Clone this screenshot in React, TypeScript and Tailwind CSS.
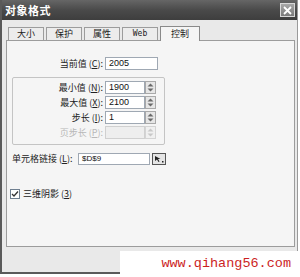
import React from "react";

const cjk = { fontFamily: '"Noto Sans CJK SC", "Liberation Sans", sans-serif' };
const latin = { fontFamily: '"Liberation Sans", "Noto Sans CJK SC", sans-serif' };

function Spinner({ disabled }: { disabled?: boolean }) {
  const c = disabled ? "#c8c8c8" : "#6a6a6a";
  return (
    <div className={`w-[11px] h-[13px] border ${disabled ? "border-[#d4d4d4] bg-[#f0f0f0]" : "border-[#a9a9a9] bg-[#e6e6e6]"} flex flex-col items-center justify-center gap-[1px]`}>
      <svg width="7" height="4" viewBox="0 0 7 4"><path d="M0.5 3.5 L3.5 0.5 L6.5 3.5 Z" fill={c} /></svg>
      <svg width="7" height="4" viewBox="0 0 7 4"><path d="M0.5 0.5 L3.5 3.5 L6.5 0.5 Z" fill={c} /></svg>
    </div>
  );
}

function Label({ text, k, w, disabled }: { text: string; k: string; w: string; disabled?: boolean }) {
  return (
    <div className={`${w} text-right text-[9px] leading-[13px] whitespace-nowrap pr-[2px] ${disabled ? "text-[#b8b8b8]" : "text-[#222]"}`} style={cjk}>
      {text} (<u>{k}</u>):
    </div>
  );
}

function SpinRow({ label, k, value, disabled }: { label: string; k: string; value: string; disabled?: boolean }) {
  return (
    <div className="flex items-center h-[13px]">
      <Label text={label} k={k} w="w-[92px]" disabled={disabled} />
      <div className={`w-[40px] h-[13px] border ${disabled ? "border-[#d0d0d0] bg-[#eeeeee]" : "border-[#9fa8b3] bg-white"} text-[9px] leading-[11px] pl-[3px] text-[#111]`} style={latin}>
        {value}
      </div>
      <Spinner disabled={disabled} />
    </div>
  );
}

export default function App() {
  const tabs = ["大小", "保护", "属性", "Web"];
  return (
    <div className="w-[300px] h-[277px] bg-white relative overflow-hidden">
      <div className="w-[298px] h-[274px] bg-[#e9e9e9] border-l-2 border-r border-b-2 border-[#5a5a5a] border-r-[#9a9a9a] flex flex-col">
        {/* Title bar */}
        <div className="h-[20px] bg-gradient-to-b from-[#666666] via-[#4a4a4a] to-[#3e3e3e] flex items-center justify-between pl-[3px] pr-[2px]">
          <span className="text-white font-bold text-[11px] leading-none tracking-[0.5px]" style={cjk}>对象格式</span>
          <div className="w-[15px] h-[14px] border border-[#d8d8d8] bg-gradient-to-b from-[#a8a8a8] to-[#7a7a7a] flex items-center justify-center">
            <svg width="9" height="9" viewBox="0 0 9 9"><path d="M1 1 L8 8 M8 1 L1 8" stroke="#ffffff" strokeWidth="1.8" /></svg>
          </div>
        </div>
        {/* Tabs */}
        <div className="h-[20px] flex items-end pl-[6px] gap-[2px]">
          {tabs.map((t) => (
            <div key={t} className="w-[36px] h-[13px] border border-b-0 border-[#9c9c9c] bg-[#ececec] flex items-center justify-center text-[9px] text-[#222]" style={t === "Web" ? { fontFamily: '"DejaVu Sans Mono", monospace', fontSize: "8px" } : cjk}>
              {t}
            </div>
          ))}
          <div className="w-[40px] h-[15px] border border-b-0 border-[#8a8a8a] bg-[#f5f5f5] flex items-center justify-center text-[9px] text-[#222] -mb-[1px] relative z-10" style={cjk}>
            控制
          </div>
        </div>
        {/* Panel */}
        <div className="ml-[4px] w-[289px] h-[207px] border border-[#9c9c9c] bg-[#f5f5f5] flex flex-col">
          <div className="flex items-center h-[13px] mt-[16px]">
            <Label text="当前值" k="C" w="w-[98px]" />
            <div className="w-[53px] h-[13px] border border-[#9fa8b3] bg-white text-[9px] leading-[11px] pl-[3px] text-[#111]" style={latin}>2005</div>
          </div>
          <div className="ml-[5px] mt-[7px] w-[153px] h-[68px] border border-[#c4c4c4] rounded-[2px] flex flex-col pt-[3px] gap-[2px]">
            <SpinRow label="最小值" k="N" value="1900" />
            <SpinRow label="最大值" k="X" value="2100" />
            <SpinRow label="步长" k="I" value="1" />
            <SpinRow label="页步长" k="P" value="" disabled />
          </div>
          <div className="flex items-center h-[13px] mt-[7px] pl-[5px]">
            <div className="w-[66px] text-[9px] leading-[13px] whitespace-nowrap text-[#222]" style={cjk}>
              单元格链接 (<u>L</u>):
            </div>
            <div className="w-[72px] h-[12px] border border-[#9fa8b3] bg-white text-[8px] leading-[10px] pl-[3px] text-[#111]" style={latin}>$D$9</div>
            <div className="ml-[2px] w-[14px] h-[12px] border border-[#555] bg-[#e4e4e4] flex items-center justify-center">
              <svg width="10" height="8" viewBox="0 0 10 8"><path d="M1 1 L1 6 L3 4.5 L4.5 7 L5.5 6.5 L4 4 L6.5 4 Z" fill="#222" /><rect x="8" y="6" width="1.5" height="1.5" fill="#222" /></svg>
            </div>
          </div>
          <div className="flex items-center mt-[22px] pl-[3px] gap-[3px]">
            <div className="w-[10px] h-[10px] border border-[#6f7f90] bg-white flex items-center justify-center">
              <svg width="8" height="8" viewBox="0 0 8 8"><path d="M1 4 L3 6 L7 1.5" stroke="#333" strokeWidth="1.3" fill="none" /></svg>
            </div>
            <span className="text-[9px] leading-[13px] text-[#222]" style={cjk}>三维阴影 (<u>3</u>)</span>
          </div>
        </div>
      </div>
      {/* Watermark overlay */}
      <div className="absolute left-[120px] top-[251px] w-[180px] h-[26px] bg-white flex items-center justify-end pr-[9px]">
        <span className="text-[#cc1f1f] text-[13.5px] leading-none" style={{ fontFamily: '"Liberation Mono", monospace' }}>www.qihang56.com</span>
      </div>
    </div>
  );
}
